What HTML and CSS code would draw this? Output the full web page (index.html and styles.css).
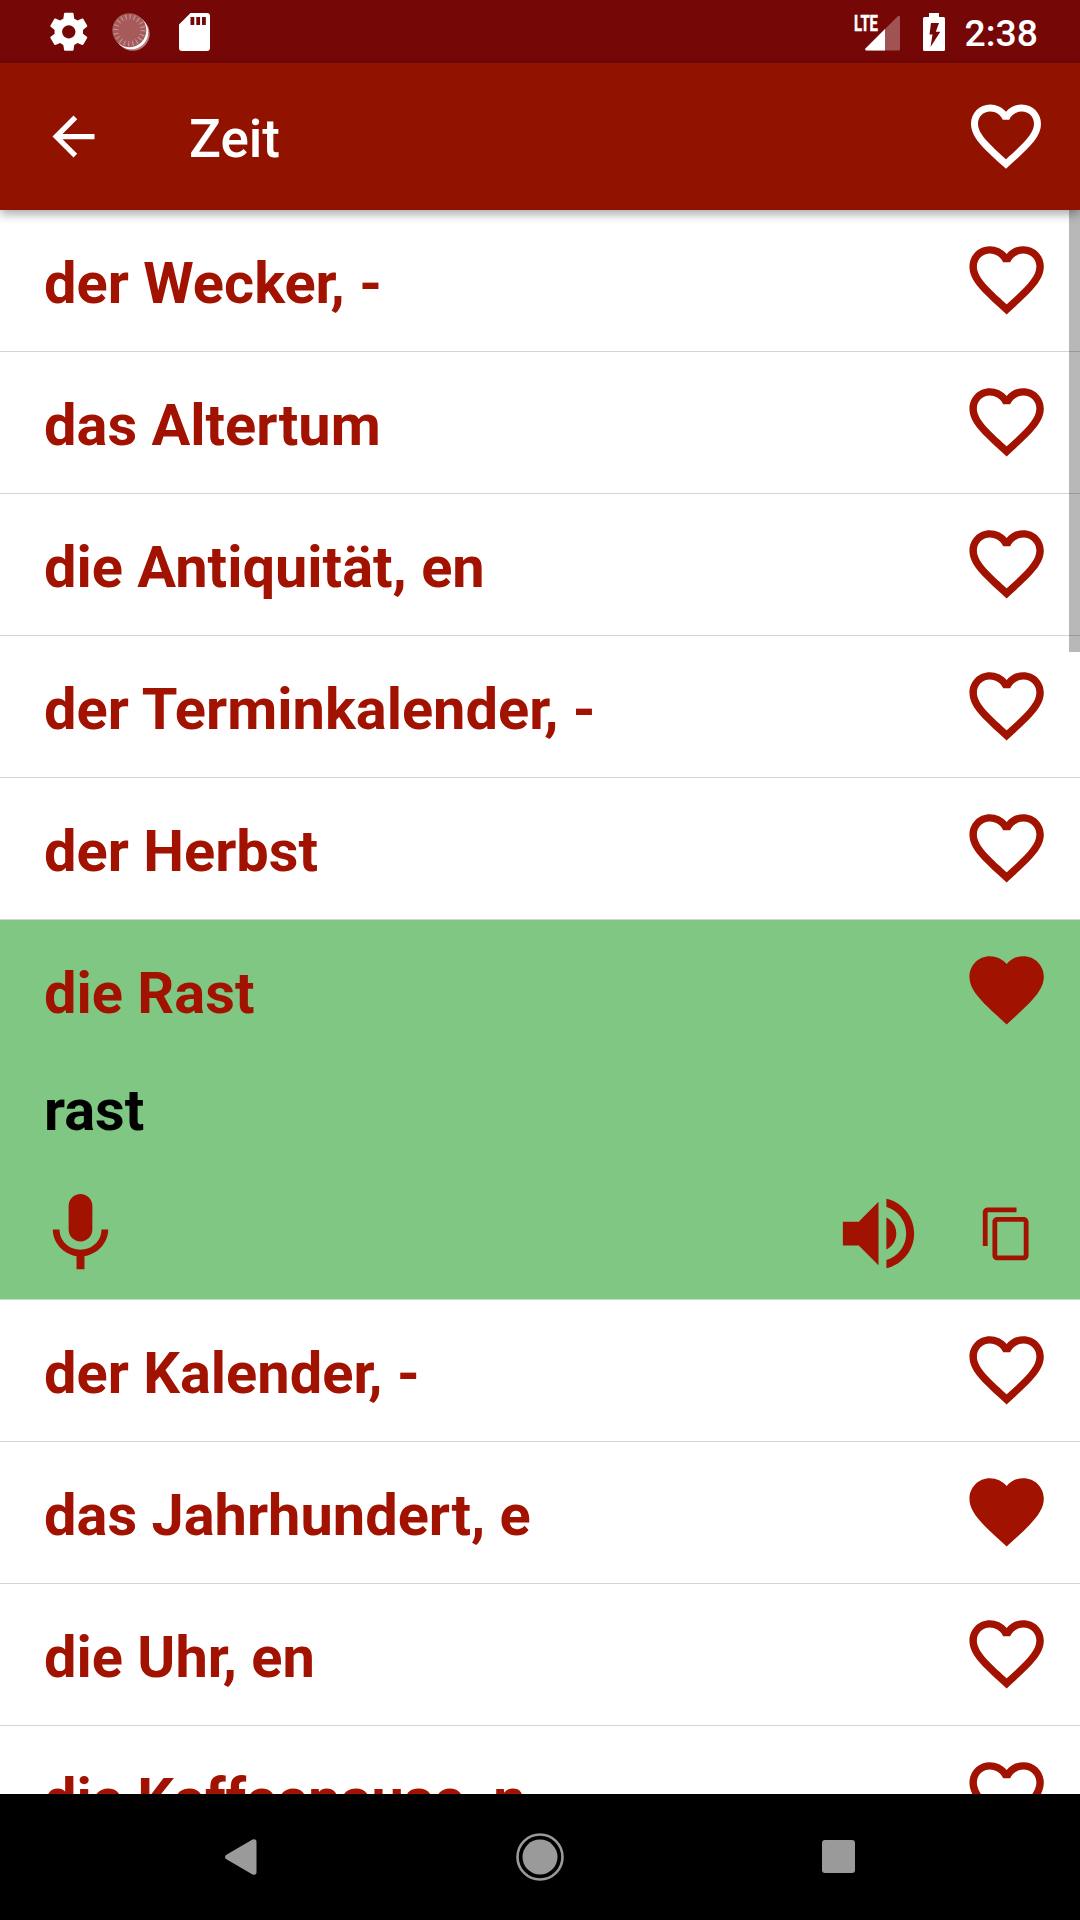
FILE: index.html
```
<!DOCTYPE html>
<html lang="de">
<head>
    <meta charset="UTF-8">
    <meta name="viewport" content="width=device-width, initial-scale=1.0">
    <title>Zeit</title>
    <link rel="stylesheet" href="styles.css">
</head>
<body>

    <!-- Shared icons -->
    <svg class="hidden">
        <symbol id="heart" viewBox="0 0 24 24">
            <path d="M16.5 3c-1.74 0-3.41.81-4.5 2.09C10.91 3.81 9.24 3 7.5 3 4.42 3 2 5.42 2 8.5c0 3.78 3.4 6.86 8.55 11.54L12 21.35l1.45-1.32C18.6 15.36 22 12.28 22 8.5 22 5.42 19.58 3 16.5 3zm-4.4 15.55l-.1.1-.1-.1C7.14 14.24 4 11.39 4 8.5 4 6.5 5.5 5 7.5 5c1.54 0 3.04.99 3.57 2.36h1.87C13.46 5.99 14.96 5 16.5 5c2 0 3.5 1.5 3.5 3.5 0 2.89-3.14 5.74-7.9 10.05z"/>
        </symbol>
        <symbol id="heart-full" viewBox="0 0 24 24">
            <path d="M12 21.35l-1.45-1.32C5.4 15.36 2 12.28 2 8.5 2 5.42 4.42 3 7.5 3c1.74 0 3.41.81 4.5 2.09C13.09 3.81 14.76 3 16.5 3 19.58 3 22 5.42 22 8.5c0 3.78-3.4 6.86-8.55 11.54L12 21.35z"/>
        </symbol>
    </svg>

    <div class="screen">

        <!-- Status Bar -->
        <div class="status-bar">
            <svg class="gear-icon" viewBox="0 0 24 24"><path d="M19.43 12.98c.04-.32.07-.64.07-.98s-.03-.66-.07-.98l2.11-1.65c.19-.15.24-.42.12-.64l-2-3.46c-.12-.22-.39-.3-.61-.22l-2.49 1c-.52-.4-1.08-.73-1.69-.98l-.38-2.65C14.46 2.18 14.25 2 14 2h-4c-.25 0-.46.18-.49.42l-.38 2.65c-.61.25-1.17.59-1.69.98l-2.49-1c-.23-.09-.49 0-.61.22l-2 3.46c-.13.22-.07.49.12.64l2.11 1.65c-.04.32-.07.65-.07.98s.03.66.07.98l-2.11 1.65c-.19.15-.24.42-.12.64l2 3.46c.12.22.39.3.61.22l2.49-1c.52.4 1.08.73 1.69.98l.38 2.65c.03.24.24.42.49.42h4c.25 0 .46-.18.49-.42l.38-2.65c.61-.25 1.17-.59 1.69-.98l2.49 1c.23.09.49 0 .61-.22l2-3.46c.12-.22.07-.49-.12-.64l-2.11-1.65zM12 15.5c-1.93 0-3.5-1.57-3.5-3.5s1.57-3.5 3.5-3.5 3.5 1.57 3.5 3.5-1.57 3.5-3.5 3.5z"/></svg>
            <svg class="sync-icon" viewBox="0 0 38 38">
                <circle cx="20.7" cy="20.7" r="17" fill="#b98080"/>
                <circle cx="19.2" cy="19.2" r="17" fill="#fff"/>
                <circle cx="17.3" cy="17.3" r="17" fill="#a65a5a"/>
                <circle cx="17.3" cy="17.3" r="13.5" fill="none" stroke="#c99a9a" stroke-width="5" stroke-dasharray="1 3.24"/>
            </svg>
            <svg class="sd-icon" viewBox="0 0 31 38"><path fill-rule="evenodd" d="M11.500 0H28a3 3 0 0 1 3 3V35a3 3 0 0 1-3 3H3a3 3 0 0 1-3-3V11.500zM11.500 4v8h3.800V4zM17.300 4v8h3.800V4zM23 4v8h3.800V4z"/></svg>
            <div class="status-right">
                <svg class="signal-icon" viewBox="0 0 46 38">
                    <path d="M11 37.500V36L44 3q2-1 2 1V36q0 1.500-1.500 1.500z" fill-opacity=".31"/>
                    <path d="M31 16V37.500H12.500q-2-.5-1-2z"/>
                    <text x="0" y="17.500" textLength="24" lengthAdjust="spacingAndGlyphs">LTE</text>
                </svg>
                <svg class="battery-icon" viewBox="0 0 22 38"><path fill-rule="evenodd" d="M6 0h10v4h4.500q1.500 0 1.500 1.500v31q0 1.500-1.500 1.500h-19q-1.500 0-1.500-1.500v-31q0-1.500 1.500-1.500H6zM8 10L6.500 21.500h3L7.500 34 17.300 18.700h-4.500L16 10z"/></svg>
                <span class="clock">2:38</span>
            </div>
        </div>

        <!-- Title Bar -->
        <div class="title-bar">
            <svg class="back-icon" viewBox="0 0 24 24"><path d="M20 11H7.830l5.590-5.590L12 4l-8 8 8 8 1.410-1.410L7.830 13H20v-2z"/></svg>
            <h1>Zeit</h1>
            <svg class="title-heart"><use href="#heart"/></svg>
        </div>

        <!-- Word List -->
        <div class="list">
            <div class="row"><span>der Wecke<i>r</i>, -</span><svg class="heart"><use href="#heart"/></svg></div>
            <div class="row"><span>das Altertum</span><svg class="heart"><use href="#heart"/></svg></div>
            <div class="row"><span>die Antiquität, en</span><svg class="heart"><use href="#heart"/></svg></div>
            <div class="row"><span>der Terminkalende<i>r</i>, -</span><svg class="heart"><use href="#heart"/></svg></div>
            <div class="row"><span>der Herbst</span><svg class="heart"><use href="#heart"/></svg></div>

            <!-- Opened word -->
            <div class="open">
                <div class="row"><span>die Rast</span><svg class="heart"><use href="#heart-full"/></svg></div>
                <p class="answer">rast</p>
                <div class="actions">
                    <svg class="mic-icon" viewBox="0 0 24 24"><path d="M12 14c1.660 0 2.990-1.340 2.990-3L15 5c0-1.660-1.340-3-3-3S9 3.340 9 5v6c0 1.660 1.340 3 3 3zm5.300-3c0 3-2.540 5.100-5.300 5.100S6.700 14 6.700 11H5c0 3.410 2.720 6.230 6 6.720V21h2v-3.280c3.280-.48 6-3.300 6-6.720h-1.700z"/></svg>
                    <svg class="sound-icon" viewBox="0 0 24 24"><path d="M3 9v6h4l5 5V4L7 9H3zm13.500 3c0-1.770-1.020-3.290-2.500-4.030v8.050c1.480-.73 2.500-2.250 2.500-4.020zM14 3.230v2.060c2.890.86 5 3.540 5 6.710s-2.110 5.850-5 6.710v2.060c4.010-.91 7-4.490 7-8.770s-2.990-7.860-7-8.770z"/></svg>
                    <svg class="copy-icon" viewBox="0 0 24 24"><path d="M16 1H4c-1.100 0-2 .9-2 2v14h2V3h12V1zm3 4H8c-1.100 0-2 .9-2 2v14c0 1.100.9 2 2 2h11c1.100 0 2-.9 2-2V7c0-1.100-.9-2-2-2zm0 16H8V7h11v14z"/></svg>
                </div>
            </div>

            <div class="row"><span>der Kalende<i>r</i>, -</span><svg class="heart"><use href="#heart"/></svg></div>
            <div class="row"><span>das Jahrhundert, e</span><svg class="heart"><use href="#heart-full"/></svg></div>
            <div class="row"><span>die Uh<i>r</i>, en</span><svg class="heart"><use href="#heart"/></svg></div>
            <div class="row"><span>die Kaffeepause, n</span><svg class="heart"><use href="#heart"/></svg></div>
            <div class="scrollbar"></div>
        </div>

        <!-- Navigation Bar -->
        <div class="nav-bar">
            <svg class="nav-back" viewBox="0 0 32 36"><path d="M1 16L27.500.5Q31.500-.5 31.500 3V33q0 3.500-4 2.500L1 20Q-1 18 1 16z"/></svg>
            <svg class="nav-home" viewBox="0 0 48 48"><circle cx="24" cy="24" r="17.500"/><circle cx="24" cy="24" r="22.500" fill="none" stroke="#9a9a9a" stroke-width="2.600"/></svg>
            <div class="nav-recent"></div>
        </div>
    </div>

</body>
</html>
```
FILE: styles.css
```
body {
    font-family: Roboto, sans-serif;
    background-color: white;
    margin: 0;
    padding: 0;
}

svg {
    display: block;
    flex-shrink: 0;
    fill: white;
}

.hidden {
    display: none;
}

.screen {
    display: flex;
    flex-direction: column;
    width: 1080px;
    height: 1920px;
    overflow: hidden;
}

/* Status Bar */
.status-bar {
    display: flex;
    align-items: center;
    box-sizing: border-box;
    flex-shrink: 0;
    height: 63px;
    padding: 0 42px 0 45.5px;
    background-color: #750707;
}

.gear-icon {
    width: 45.6px;
    height: 45.6px;
}

.sync-icon {
    width: 38px;
    height: 38px;
    margin-left: 21px;
}

.sd-icon {
    width: 31px;
    height: 38px;
    margin-left: 28.5px;
}

.status-right {
    display: flex;
    align-items: center;
    margin-left: auto;
}

.signal-icon {
    width: 46px;
    height: 38px;
    margin-right: 23px;
    font-size: 22.5px;
    font-weight: bold;
    overflow: visible;
}

.signal-icon text {
    stroke: white;
    stroke-width: 0.5px;
}

.battery-icon {
    width: 22px;
    height: 38px;
    margin-right: 20px;
}

.clock {
    color: white;
    font-size: 37.3px;
    font-weight: 500;
    line-height: 43px;
    padding-top: 3px;
}

/* Title Bar */
.title-bar {
    display: flex;
    align-items: center;
    position: relative;
    z-index: 1;
    box-sizing: border-box;
    flex-shrink: 0;
    height: 147px;
    padding: 0 32px 0 42px;
    background-color: #921200;
    box-shadow: 0 4px 10px rgba(0, 0, 0, 0.35);
}

.back-icon {
    width: 63px;
    height: 63px;
}

.title-bar h1 {
    color: white;
    font-size: 53px;
    font-weight: 500;
    line-height: 62px;
    margin: 0;
    padding: 5px 0 0 84px;
}

.title-heart {
    width: 84px;
    height: 84px;
    margin: 0 0 2px auto;
}

/* Word List */
.list {
    position: relative;
    flex: 1;
    min-height: 0;
    overflow: hidden;
    color: #a11200;
    font-size: 57.75px;
    font-weight: bold;
}

.list svg {
    fill: #a11200;
}

.row {
    display: flex;
    align-items: center;
    justify-content: space-between;
    box-sizing: border-box;
    height: 142px;
    padding: 0 29px 0 44px;
    border-bottom: 1px solid #d3d5d3;
}

.row span {
    line-height: 68px;
    padding-top: 4px;
}

/* tighter comma after r */
.row i {
    font-style: normal;
    letter-spacing: -6.2px;
}

.heart {
    width: 89.25px;
    height: 89.25px;
    margin-bottom: 1px;
}

.open {
    box-sizing: border-box;
    height: 380px;
    background-color: #81c784;
    border-bottom: 1px solid #c5dcc6;
}

.open .row {
    border-bottom-color: transparent;
}

.answer {
    color: black;
    line-height: 68px;
    margin: 0;
    padding: 14px 44px 0;
}

.actions {
    display: flex;
    align-items: center;
    margin-top: 42px;
    padding: 0 44px 0 33px;
}

.mic-icon,
.sound-icon {
    width: 95px;
    height: 95px;
}

.sound-icon {
    margin: 0 52px 0 auto;
}

.copy-icon {
    width: 57.75px;
    height: 57.75px;
}

.scrollbar {
    position: absolute;
    top: 0;
    right: 0;
    width: 11px;
    height: 442px;
    background-color: rgba(0, 0, 0, 0.28);
}

/* Navigation Bar */
.nav-bar {
    display: flex;
    align-items: center;
    justify-content: space-between;
    box-sizing: border-box;
    flex-shrink: 0;
    height: 126px;
    padding: 0 225px 1px 225px;
    background-color: black;
}

.nav-bar svg {
    fill: #9a9a9a;
}

.nav-back {
    width: 32px;
    height: 36px;
}

.nav-home {
    width: 48px;
    height: 48px;
}

.nav-recent {
    width: 33px;
    height: 33px;
    border-radius: 3px;
    background-color: #9a9a9a;
}
```
